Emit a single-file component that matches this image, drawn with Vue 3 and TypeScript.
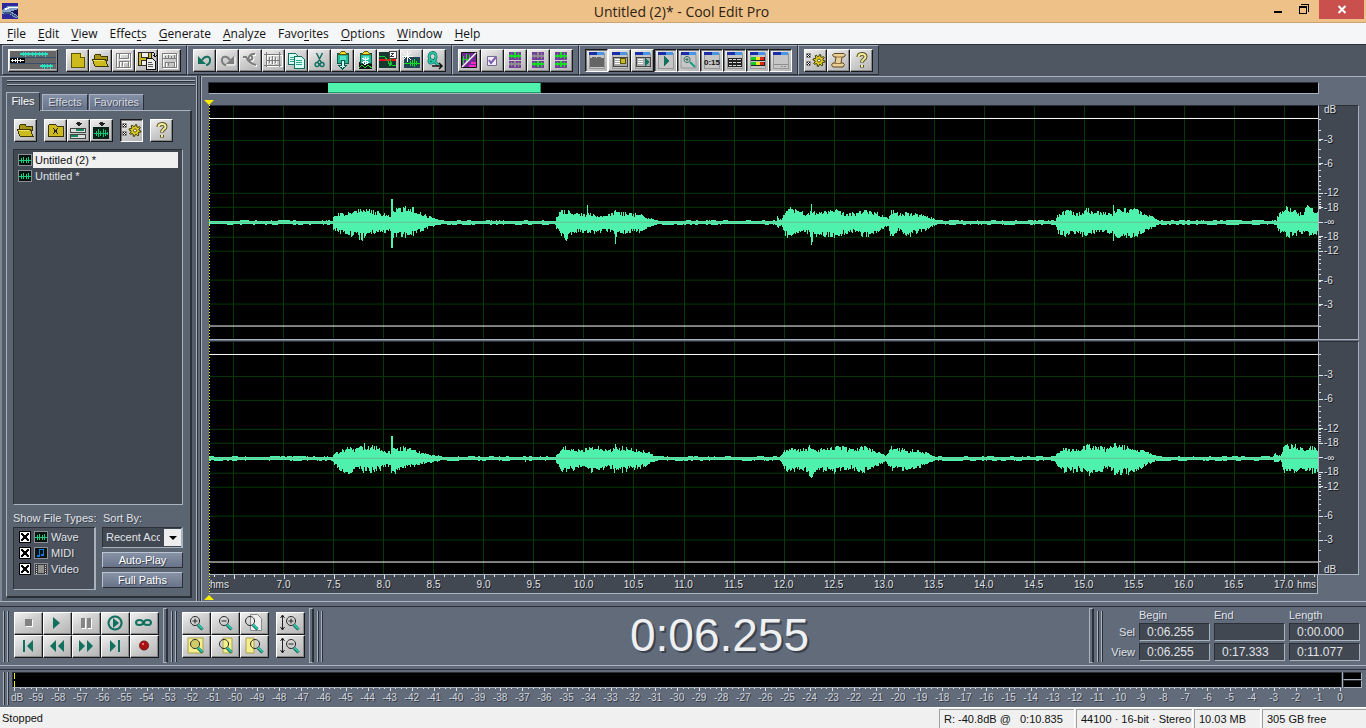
<script setup lang="ts">
import { ref } from 'vue'

type Shape = { d: string; f?: string; s?: string; w?: number }
type Tool = { id: string; label: string; down?: boolean; soft?: boolean; text?: string; shapes: Shape[] }

const OLIVE = '#3c3600'
const GOLD = '#cdbb1e'
const TEAL = '#12705f'
const AQUA = '#2ad0b0'
const GREY = '#7d7d7d'
const LIME = '#10e020'

function cog(cx: number, cy: number, outer: number, inner: number): string {
  const pts: string[] = []
  for (let i = 0; i < 32; i++) {
    const r = i % 4 < 2 ? outer : inner
    const a = ((i + 0.5) / 32) * Math.PI * 2
    pts.push(`${(cx + r * Math.cos(a)).toFixed(2)} ${(cy + r * Math.sin(a)).toFixed(2)}`)
  }
  return `M${pts.join('L')}z`
}

const folder: Shape[] = [
  { d: 'M5 7l2-2h4l1 2h6v4H5z', f: '#a89614', s: OLIVE },
  { d: 'M3 10h13l3 7H6z', f: GOLD, s: OLIVE },
  { d: 'M5 11h10', s: '#f0e468' },
]
const gear: Shape[] = [
  { d: 'M2.500 4.500h4v4h-4zM2.500 12.500h4v4h-4z', f: '#f4f4f4', s: '#888' },
  { d: 'M3 5l3 3M6 5l-3 3M3 13l3 3M6 13l-3 3', s: '#111' },
  { d: cog(15, 11.5, 6, 4), f: '#dccb22', s: '#3a3500' },
  { d: 'M15 10a1.500 1.500 0 1 0 .1 0z', f: '#fff', s: '#4a4400' },
]
const question: Shape[] = [
  { d: 'M8.500 8c0-4 7-4 7-.5 0 3-3.500 2.500-3.500 6M12 16v2.500', s: '#55501f', w: 4 },
  { d: 'M8.500 8c0-4 7-4 7-.5 0 3-3.500 2.500-3.500 5.500M12 16v2', s: '#f5eda0', w: 2 },
]
const win: Shape[] = [
  { d: 'M4 4h15v15H4z', f: '#c6c6c6', s: '#989898' },
  { d: 'M4 3h8v3H4z', f: '#1c2da8' },
  { d: 'M12 3h7v3h-7z', f: '#4a94e4' },
]
const wavePair = (top: string, low: string): Shape[] => [
  { d: 'M5 3h12v8H5zM5 12h12v7H5z', f: '#74409a' },
  { d: 'M5 6h12v2H5zM7 5h1v4H7zM10 3h2v6h-2zM14 4h1v6h-1z', f: top },
  { d: 'M5 14h12v2H5zM7 13h1v4H7zM10 12h2v6h-2zM14 13h1v5h-1z', f: low },
]
const clipboard: Shape[] = [
  { d: 'M6 4h11v10H6z', f: '#28b99b', s: '#0b5a4c' },
  { d: 'M8 5l3-3h2l3 3z', f: '#f0dc30', s: '#635800' },
  { d: 'M9 7h6v4H9z', f: '#4fe4c2' },
]

const fileTools: Tool[] = [
  { id: 'new', label: 'New', shapes: [{ d: 'M5 4h9l4 4v10H5z', f: GOLD, s: '#5e5400' }, { d: 'M14 4v4h4', f: '#f2e96c', s: '#5e5400' }] },
  { id: 'open', label: 'Open', shapes: folder },
  { id: 'save', label: 'Save', shapes: [{ d: 'M5 5h14v14H5zM8 5v5h9V5M8 19v-6h9v6M11 14v4', s: '#fff' }, { d: 'M4 4h14v14H4zM7 4v5h9V4M7 18v-6h9v6M10 13v4', s: GREY }] },
  { id: 'saveas', label: 'Save As', shapes: [{ d: 'M3 3h13v13H3z', f: GOLD, s: '#222' }, { d: 'M6 3h7v5H6zM6 11h5v5H6z', f: '#eee', s: '#333' }, { d: 'M11 9h6l3 3v8h-9z', f: '#eee', s: '#111' }, { d: 'M13 13h4M13 15h5M13 17h5', s: '#555' }, { d: 'M16 3c4 0 4 2 4 5M18 6l2 2 2-2', s: '#111' }] },
  { id: 'savesel', label: 'Save Selection', shapes: [{ d: 'M5 5h14v14H5zM8 19v-6h9v6', s: '#fff' }, { d: 'M4 4h14v14H4zM7 18v-5h9v5M10 14v3M4 9h14M7 7v3M10 6v4M13 7v3M16 6v4', s: GREY }] },
]
const editTools: Tool[] = [
  { id: 'undo', label: 'Undo', soft: true, shapes: [{ d: 'M9 11c3-5 9-4 8 1 0 2-2 4-4 4', s: TEAL, w: 2 }, { d: 'M5 7v8h8z', f: TEAL }] },
  { id: 'redo', label: 'Redo', soft: true, shapes: [{ d: 'M19 8v8h-8', s: '#fff' }, { d: 'M14 11c-3-5-9-4-8 1 0 2 2 4 4 4', s: GREY, w: 2 }, { d: 'M18 7v8h-8z', f: GREY }] },
  { id: 'repeat', label: 'Repeat Last Command', soft: true, shapes: [{ d: 'M17 6c-6-1-8 6-5 6 3 0 3-3 1-4M5 9h3c2 4 5 7 10 8', s: '#fff', w: 2 }, { d: 'M16 5c-6-1-8 6-5 6 3 0 3-3 1-4M4 8h3c2 4 5 7 10 8', s: GREY, w: 2 }] },
  { id: 'trim', label: 'Trim', shapes: [{ d: 'M5 6h15v11H5zM8 9v6M11 8v8M14 9v6', s: '#fff' }, { d: 'M2 5h17M2 16h17M4 3v15M17 3v15M4 11h13M7 8v6M10 7v8M13 8v6', s: GREY }] },
  { id: 'copy', label: 'Copy', shapes: [{ d: 'M3 4h7l3 3v8H3z', f: '#d9fff4', s: TEAL }, { d: 'M5 8h6M5 10h6M5 12h6', s: '#35a68e' }, { d: 'M9 7h7l3 3v9H9z', f: '#d9fff4', s: TEAL }, { d: 'M11 11h6M11 13h6M11 15h6', s: '#35a68e' }] },
  { id: 'cut', label: 'Cut', soft: true, shapes: [{ d: 'M8.500 4l5 10M14.500 4l-5 10M9 13.500a2 2 0 1 0 .1 0zM14 13.500a2 2 0 1 0 .1 0z', s: TEAL, w: 1.5 }] },
  { id: 'paste', label: 'Paste', shapes: [...clipboard, { d: 'M10 11h3v5h3l-4.500 4-4.500-4h3z', f: '#c9fff2', s: '#0b5a4c' }] },
  { id: 'mix', label: 'Mix Paste', shapes: [{ d: 'M5 13h13v7H5z', f: '#111' }, ...clipboard, { d: 'M11 8v8M8 13l3 3 4-3M8 9l7 5M15 9l-7 5', s: '#fff' }, { d: 'M5 19l3-3 3 3 3-3 4 3', s: LIME }] },
  { id: 'zero', label: 'Adjust Zero Crossings', shapes: [{ d: 'M2 3h17v16H2z', f: '#15392f' }, { d: 'M2 11h17', s: '#e61515', w: 2 }, { d: 'M2 7h5l4 5 2 5v-7l2 6h4', s: '#13c931' }, { d: 'M12 2h7v7h-7z', f: '#fff', s: '#444' }, { d: 'M14 4h3l-3 3h3', s: '#333' }] },
  { id: 'beat', label: 'Find Beats', shapes: [{ d: 'M4 8h16v11H4z', f: '#204656' }, { d: 'M7 2v11M2 7h11M3 3l8 8M11 3l-8 8', s: '#fff' }, { d: 'M4 14h16M10 12v5M12 11v6M14 10v8M16 12v4', s: LIME }] },
  { id: 'find', label: 'Scan Phrase', soft: true, shapes: [{ d: 'M7 10c-4-7 7-9 6-2-1 6-7 8-7 4 0-3 6 0 9 4', s: TEAL, w: 3 }, { d: 'M7 10c-4-7 7-9 6-2-1 6-7 8-7 4 0-3 6 0 9 4', s: AQUA, w: 1.5 }, { d: 'M9 17h9M16 14l3 3-3 3', s: '#111', w: 1.5 }] },
]
const viewTools: Tool[] = [
  { id: 'spectral', label: 'Spectral View', soft: true, shapes: [{ d: 'M3.500 3.500h15v15h-15z', f: '#702b91', s: '#111' }, { d: 'M4 10.500h6M5.500 7v8M8.500 5v9M11.500 6v5', s: LIME }, { d: 'M11 17h7M13 14h5', s: '#ff27ce', w: 2 }, { d: 'M4 18L18 4', s: '#fff', w: 1.5 }] },
  { id: 'select', label: 'Selection Check', soft: true, shapes: [{ d: 'M6.500 7.500h9v9h-9z', f: '#f3eefe', s: '#786b91' }, { d: 'M8 11l2 3 5-6', s: '#7d60b0', w: 2 }] },
  { id: 'left', label: 'Edit Left', shapes: wavePair(LIME, '#8d8d8d') },
  { id: 'right', label: 'Edit Right', shapes: wavePair('#8d8d8d', LIME) },
  { id: 'both', label: 'Edit Both', shapes: wavePair(LIME, LIME) },
]
const windowTools: Tool[] = [
  { id: 'organizer', label: 'Organizer', down: true, shapes: [...win, { d: 'M5 9h1l1-1h3l1 1 1-1h3l1 1h3v9H5z', f: '#656565' }] },
  { id: 'cues', label: 'Cue List', shapes: [...win, { d: 'M5 8h14v9H5z', f: '#aaa', s: '#444' }, { d: 'M7 10h5M7 12h5M7 14h5', s: '#fff' }, { d: 'M12 9h5v5h-5z', f: '#c9bb28', s: '#5b5300' }] },
  { id: 'plays', label: 'Play List', shapes: [...win, { d: 'M5 8h14v9H5z', f: '#aaa', s: '#444' }, { d: 'M7 10h5M7 12h5M7 14h5', s: '#fff' }, { d: 'M14 9l4 4-4 4z', f: TEAL }] },
  { id: 'transport', label: 'Transport Controls', down: true, shapes: [...win, { d: 'M10 7l5 5-5 5z', f: TEAL }] },
  { id: 'zoombar', label: 'Zoom Controls', down: true, soft: true, shapes: [...win, { d: 'M10 7.500a3 3 0 1 0 .1 0zM8.500 10.500h3M10 9v3', s: '#2a6a60' }, { d: 'M13 13l5 5', s: '#169b83', w: 2 }] },
  { id: 'time', label: 'Time Window', down: true, text: '0:15', shapes: win },
  { id: 'selview', label: 'Selection Window', down: true, shapes: [...win, { d: 'M5 9h14v9H5z', f: '#222' }, { d: 'M6 10h3v1H6zM10 10h3v1h-3zM14 10h4v1h-4zM6 13h3v1H6zM10 13h3v1h-3zM14 13h4v1h-4zM6 16h3v1H6zM10 16h3v1h-3zM14 16h4v1h-4z', f: '#d8d8d8' }] },
  { id: 'levels', label: 'Level Meters', down: true, shapes: [...win, { d: 'M5 8h14v4H5zM5 13h14v4H5z', f: '#222' }, { d: 'M5 8h5v3H5zM5 13h5v3H5z', f: '#14c82b' }, { d: 'M10 8h4v3h-4zM10 13h4v3h-4z', f: '#f1e920' }, { d: 'M14 8h4v3h-4zM14 13h4v3h-4z', f: '#e42318' }] },
  { id: 'status', label: 'Status Bar', down: true, shapes: [...win, { d: 'M5 15h14M12 17h2M15 17h2', s: '#8e8e8e' }] },
]
const helpTools: Tool[] = [
  { id: 'settings', label: 'Settings', soft: true, shapes: gear },
  { id: 'scripts', label: 'Scripts', soft: true, shapes: [{ d: 'M7 4.500h10l1.500 1.500-1.500 2h-2l-1 6h2l1.500 1.500-1.500 2.500H6l-1.500-2L6 14h2l1-6H7L5.500 6z', f: '#e9cf98', s: '#604923' }, { d: 'M8 8h7M8 14.500h6', s: '#96733a' }] },
  { id: 'help', label: 'Help', soft: true, shapes: question },
]
const toolGroups = [editTools, viewTools, windowTools, helpTools]

const insert = (wave: boolean): Shape[] => wave
  ? [{ d: 'M3 8h16v12H3z', f: '#072219' }, { d: 'M4 14h14M6 12v5M8 10v8M10 12v5M13 10v8M15 11v6M17 13v3', s: '#12c878' }, { d: 'M10 3h3v1h2l-3 3-4-3h2z', f: '#222' }]
  : [{ d: 'M3 9h15v4H3zM3 15h15v4H3z', f: '#ddd', s: '#444' }, { d: 'M9 11h8M4 17h7', s: '#11885e', w: 2 }, { d: 'M10 3h3v1h2l-3 3-4-3h2z', f: '#222' }]
const organizerGroups: Tool[][] = [
  [{ id: 'oopen', label: 'Open File', shapes: folder }],
  [
    { id: 'oclose', label: 'Close Files', shapes: [{ d: 'M4 7l2-2h5l2 2h6v10H4z', f: GOLD, s: OLIVE }, { d: 'M9 9l5 6M14 9l-5 6', s: '#222' }] },
    { id: 'oinsert', label: 'Insert Into Multitrack', shapes: insert(false) },
    { id: 'oedit', label: 'Edit File', shapes: insert(true) },
  ],
  [{ id: 'oadv', label: 'Advanced Options', down: true, soft: true, shapes: gear }],
  [{ id: 'ohelp', label: 'Organizer Help', soft: true, shapes: question }],
]

const transport: Tool[] = [
  { id: 'stop', label: 'Stop', shapes: [{ d: 'M12 8h7v7h-7z', f: '#fff' }, { d: 'M11 7h7v7h-7z', f: '#828282' }] },
  { id: 'play', label: 'Play', shapes: [{ d: 'M10 5v12l7-6z', f: TEAL }] },
  { id: 'pause', label: 'Pause', shapes: [{ d: 'M10 7h4v10h-4zM16 7h4v10h-4z', f: '#fff' }, { d: 'M9 6h4v10H9zM15 6h4v10h-4z', f: '#858585' }] },
  { id: 'playto', label: 'Play to End', shapes: [{ d: 'M14 4.500a6.500 6.500 0 1 0 .1 0z', s: TEAL, w: 2 }, { d: 'M12 6v10l6-5z', f: TEAL }] },
  { id: 'loop', label: 'Play Looped', shapes: [{ d: 'M6 10.500a3.500 2.500 0 1 0 7 0a3.500 2.500 0 1 0-7 0zM14 10.500a3.500 2.500 0 1 0 7 0a3.500 2.500 0 1 0-7 0z', s: TEAL, w: 2 }] },
  { id: 'begin', label: 'Go to Beginning', shapes: [{ d: 'M9 5h2v12H9zM19 5v12l-6-6z', f: TEAL }] },
  { id: 'rewind', label: 'Rewind', shapes: [{ d: 'M13 5v12l-6-6zM21 5v12l-6-6z', f: TEAL }] },
  { id: 'forward', label: 'Fast Forward', shapes: [{ d: 'M7 5v12l6-6zM15 5v12l6-6z', f: TEAL }] },
  { id: 'end', label: 'Go to End', shapes: [{ d: 'M9 5v12l6-6zM17 5h2v12h-2z', f: TEAL }] },
  { id: 'record', label: 'Record', shapes: [{ d: 'M14 6a4.500 4.500 0 1 0 .1 0z', f: '#ac1012', s: '#68191a' }, { d: 'M12 8h2v2h-2z', f: '#f07070' }] },
]
const lens = (mark = '', dx = 0): Shape[] => [
  { d: `M${13 + dx} 4.500a4.500 4.500 0 1 0 .1 0z${mark}`, s: '#252525' },
  { d: `M${16 + dx} 13l4.500 4.500`, s: '#0a5144', w: 3 },
  { d: `M${16 + dx} 12.500l4.500 4.500`, s: '#25c7aa', w: 2 },
]
const note = '#f4ef8c'
const zooms: Tool[] = [
  { id: 'zin', label: 'Zoom In', shapes: lens('M10.500 9h5M13 6.500v5') },
  { id: 'zout', label: 'Zoom Out', shapes: lens('M10.500 9h5') },
  { id: 'zfull', label: 'Zoom Full', shapes: [{ d: 'M10.500 2.500h7l4 4v12h-11z', f: '#eee', s: '#888' }, ...lens('', -3)] },
  { id: 'zsel', label: 'Zoom to Selection', shapes: [{ d: 'M6 3h15v15H6z', f: note, s: '#aaa24d' }, { d: 'M13 5a4 4 0 1 0 .1 0z', f: '#cfcb66' }, ...lens()] },
  { id: 'zleft', label: 'Zoom to Left of Selection', shapes: [{ d: 'M12 3h9v15h-9z', f: note, s: '#aaa24d' }, ...lens()] },
  { id: 'zright', label: 'Zoom to Right of Selection', shapes: [{ d: 'M6 3h8v15H6z', f: note, s: '#aaa24d' }, ...lens('', 2)] },
]
const upDown: Shape = { d: 'M6.500 3v15M4.500 6l2-3 2 3M4.500 15l2 3 2-3', s: '#222' }
const vzooms: Tool[] = [
  { id: 'vin', label: 'Zoom In Vertically', shapes: [upDown, ...lens('M12.500 9h5M15 6.500v5', 2)] },
  { id: 'vout', label: 'Zoom Out Vertically', shapes: [upDown, ...lens('M12.500 9h5', 2)] },
]

const menus = [['', 'F', 'ile'], ['', 'E', 'dit'], ['', 'V', 'iew'], ['Effec', 't', 's'], ['', 'G', 'enerate'], ['', 'A', 'nalyze'], ['Favo', 'r', 'ites'], ['', 'O', 'ptions'], ['', 'W', 'indow'], ['', 'H', 'elp']]

const files = ['Untitled (2) *', 'Untitled *']
const current = ref(0)
const types = ref([
  { name: 'Wave', on: true },
  { name: 'MIDI', on: true },
  { name: 'Video', on: true },
])

const viewStart = 6.255
const viewEnd = 17.333
const pct = (t: number) => ((t - viewStart) / (viewEnd - viewStart)) * 100
const halves = Array.from({ length: 22 }, (_, i) => 6.5 + i * 0.5)
const tenths = Array.from({ length: 111 }, (_, i) => Math.round((6.3 + i * 0.1) * 10) / 10)
const timeLabels = halves.filter((t) => t >= 7)

const dbAmp = (db: number) => Math.pow(10, -db / 20)
const levels = [3, 6, 12, 18]
const levelRows = [
  ...levels.map((db) => ({ text: `-${db}`, top: 50 - dbAmp(db) * 50 })),
  { text: '-∞', top: 50 },
  ...levels.map((db) => ({ text: `-${db}`, top: 50 + dbAmp(db) * 50 })),
]
const minorDb = Array.from({ length: 18 }, (_, i) => i + 1).flatMap((db) => [50 - dbAmp(db) * 50, 50 + dbAmp(db) * 50])

// Envelope points: time column, peak above centre, peak below centre.
type Point = [number, number, number]
const quiet = (x: number): Point => [x, 1, 1]
const channels: Point[][] = [
  [
    quiet(0), quiet(123), [124, 7, 8], [136, 10, 13], [146, 11, 14], [153, 15, 18], [157, 13, 14], [164, 12, 12], [176, 8, 10], [181, 8, 9], [182, 23, 25], [183, 23, 25], [184, 13, 16], [191, 14, 15], [197, 15, 15], [202, 16, 14], [211, 11, 10], [218, 6, 6], [226, 4, 3], [238, 1, 1],
    quiet(346), [347, 6, 6], [354, 14, 16], [357, 13, 18], [362, 11, 12], [371, 9, 10], [377, 8, 10], [378, 17, 12], [379, 9, 12], [396, 8, 9], [404, 9, 10], [406, 13, 21], [407, 11, 14], [416, 10, 12], [431, 8, 9], [441, 4, 4], [451, 1, 1],
    quiet(567), [568, 7, 6], [572, 1, 2], [576, 14, 13], [581, 14, 16], [588, 12, 12], [600, 9, 10], [602, 18, 22], [604, 11, 15], [616, 11, 14], [627, 14, 15], [636, 9, 11], [649, 11, 10], [654, 14, 17], [661, 13, 13], [671, 8, 8], [679, 4, 4], [682, 13, 17], [685, 11, 16], [689, 9, 9], [701, 10, 14], [711, 8, 10], [721, 5, 5], [730, 1, 1],
    quiet(846), [848, 8, 11], [856, 12, 14], [871, 10, 12], [876, 16, 16], [881, 11, 11], [896, 10, 11], [903, 9, 12], [904, 17, 18], [906, 14, 15], [919, 15, 17], [931, 12, 13], [941, 7, 7], [951, 1, 1],
    quiet(1067), [1068, 6, 8], [1074, 14, 14], [1078, 16, 15], [1083, 12, 14], [1094, 10, 11], [1098, 16, 14], [1103, 14, 14], [1109, 13, 15],
  ],
  [
    quiet(0), quiet(123), [124, 5, 5], [131, 8, 13], [137, 11, 16], [143, 10, 13], [149, 10, 12], [155, 14, 14], [166, 12, 13], [176, 8, 10], [181, 7, 8], [182, 22, 14], [183, 22, 14], [184, 11, 15], [196, 12, 11], [206, 8, 8], [216, 5, 5], [226, 3, 3], [238, 1, 1],
    quiet(315), [316, 3, 5], quiet(317), quiet(346), [347, 4, 5], [354, 12, 14], [366, 10, 11], [374, 9, 10], [382, 13, 14], [396, 11, 11], [403, 9, 10], [406, 13, 16], [416, 11, 13], [431, 9, 10], [441, 5, 5], [451, 1, 1],
    quiet(570), [575, 8, 11], [581, 12, 14], [593, 9, 11], [602, 13, 19], [606, 9, 13], [618, 10, 13], [628, 13, 15], [641, 9, 11], [655, 13, 15], [666, 8, 8], [676, 3, 3], [682, 12, 12], [696, 9, 12], [711, 8, 9], [726, 2, 2], [732, 1, 1],
    quiet(845), [848, 6, 9], [856, 11, 15], [871, 9, 12], [878, 14, 17], [886, 12, 15], [899, 10, 11], [904, 15, 15], [916, 13, 16], [926, 11, 13], [939, 6, 6], [949, 1, 1],
    quiet(1063), [1066, 5, 5], [1071, 2, 2], [1074, 11, 14], [1078, 15, 17], [1086, 13, 13], [1094, 9, 11], [1099, 13, 16], [1109, 11, 14],
  ],
]

function waveform(points: Point[], seed: number): string {
  const half = 116
  let out = ''
  let k = 0
  let state = seed
  const noise = () => {
    state = (Math.imul(state, 1664525) + 1013904223) >>> 0
    return state / 4294967296
  }
  let a = 1
  let b = 1
  for (let x = 0; x < 1109; x++) {
    while (k < points.length - 2 && points[k + 1][0] <= x) k++
    const [x0, u0, d0] = points[k]
    const [x1, u1, d1] = points[k + 1]
    const r = Math.min(1, Math.max(0, (x - x0) / (x1 - x0)))
    const up = u0 + (u1 - u0) * r
    const down = d0 + (d1 - d0) * r
    const calm = up < 2
    if (calm ? noise() > 0.6 : noise() > 0.15) {
      a = noise()
      b = noise()
    }
    const hi = calm ? (a > 0.7 ? 2 : 1) : Math.round(up * (up > 16 ? 1 : 0.6 + 0.45 * a))
    const lo = down < 2 ? (b > 0.7 ? 2 : 1) : Math.round(down * (down > 17 ? 1 : 0.56 + 0.48 * b))
    out += `M${x} ${half - hi}h1v${hi + lo + 1}h-1z`
  }
  return out
}
const waves = channels.map((c, i) => waveform(c, 17 + i * 40))

const meter = Array.from({ length: 61 }, (_, i) => ({ left: (i / 60) * 100, text: i === 0 ? 'dB' : i === 60 ? '0' : String(i - 60) }))
const meterTicks = Array.from({ length: 241 }, (_, i) => i / 2.4)
const times = [
  { name: 'Sel', values: ['0:06.255', '', '0:00.000'] },
  { name: 'View', values: ['0:06.255', '0:17.333', '0:11.077'] },
]
</script>

<template>
  <div class="app">
    <header class="title">
      <svg class="logo" viewBox="0 0 16 16" aria-hidden="true">
        <path d="M0 0h16v16H0z" fill="#2c2a9c" />
        <path d="M0 7L6 3h10v3l-6 2 6 4v3h-2l-7-4H0z" fill="#86a3cc" />
        <path d="M2 6l5-2h9v1H8L4 7z" fill="#fff" />
        <path d="M1 9h7l8 5v1L8 11H2z" fill="#40587c" />
        <path d="M9 8.500L16 6v7z" fill="#15165e" />
      </svg>
      <h1>Untitled (2)* - Cool Edit Pro</h1>
      <div class="winbtns">
        <button aria-label="Minimize"><svg viewBox="0 0 26 19"><path d="M9 11h8v2H9z" /></svg></button>
        <button aria-label="Restore"><svg viewBox="0 0 26 19"><path d="M8 6h8v8H8zM9 8v5h6V8zM10 4h8v8h-1V5h-7z" fill-rule="evenodd" /></svg></button>
        <button class="close" aria-label="Close"><svg viewBox="0 0 26 19"><path d="M9.500 6l7 7M16.500 6l-7 7" fill="none" stroke="#fff" stroke-width="2" /></svg></button>
      </div>
    </header>

    <nav class="menu">
      <a v-for="m in menus" :key="m.join('')" href="#">{{ m[0] }}<u>{{ m[1] }}</u>{{ m[2] }}</a>
    </nav>

    <div class="toolbars">
      <div class="group">
        <button class="tool multi" aria-label="Switch to Multitrack View">
          <svg viewBox="0 0 50 23">
            <path d="M2 2h46v18H2z" fill="#666" />
            <path d="M2 8.500h46M2 14.500h46" stroke="#35506e" />
            <path d="M2 9h15v5H2z" fill="#080808" />
            <path d="M12 5h28" stroke="#2be0c0" stroke-width="2" />
            <path d="M15.500 3v4M17.500 3v5M20.500 3v4M24.500 3v4M27.500 3v5M31.500 3v4M34.500 3v4M37.500 3v5" stroke="#2be0c0" />
            <path d="M3 11.500h13M4.500 10v3M7.500 10v3M9.500 9v5M12.500 10v3" stroke="#fff" />
            <path d="M32 17h13" stroke="#2be0c0" stroke-width="2" />
            <path d="M34.500 15v4M36.500 15v5M39.500 15v4M42.500 15v5" stroke="#2be0c0" />
          </svg>
        </button>
        <div class="run">
          <button v-for="t in fileTools" :key="t.id" class="tool" :aria-label="t.label">
            <svg viewBox="0 0 23 23"><path v-for="(p, i) in t.shapes" :key="i" :d="p.d" :fill="p.f ?? 'none'" :stroke="p.s ?? 'none'" :stroke-width="p.w ?? 1" /></svg>
          </button>
        </div>
      </div>
      <div v-for="(g, gi) in toolGroups" :key="gi" class="group">
        <button v-for="t in g" :key="t.id" class="tool" :class="{ down: t.down, soft: t.soft }" :aria-label="t.label">
          <svg viewBox="0 0 23 23">
            <path v-for="(p, i) in t.shapes" :key="i" :d="p.d" :fill="p.f ?? 'none'" :stroke="p.s ?? 'none'" :stroke-width="p.w ?? 1" />
            <text v-if="t.text" x="12" y="16" text-anchor="middle">{{ t.text }}</text>
          </svg>
        </button>
      </div>
    </div>

    <main class="work">
      <aside class="organizer">
        <div class="hgrip"></div>
        <div class="tabs" role="tablist">
          <button class="tab active" role="tab">Files</button>
          <button class="tab" role="tab">Effects</button>
          <button class="tab" role="tab">Favorites</button>
        </div>
        <section class="page">
          <div class="orgtools">
            <div v-for="(g, gi) in organizerGroups" :key="gi" class="run">
              <button v-for="t in g" :key="t.id" class="tool" :class="{ down: t.down, soft: t.soft }" :aria-label="t.label">
                <svg viewBox="0 0 23 23"><path v-for="(p, i) in t.shapes" :key="i" :d="p.d" :fill="p.f ?? 'none'" :stroke="p.s ?? 'none'" :stroke-width="p.w ?? 1" /></svg>
              </button>
            </div>
          </div>
          <ul class="files">
            <li v-for="(f, i) in files" :key="f" :class="{ on: i === current }" @click="current = i">
              <svg class="kind" viewBox="0 0 14 12"><path d="M.5.5h13v11H.5z" fill="#03140e" stroke="#8b8f96" /><path d="M1 6.500h12M3.500 4v5M5.500 3v6M8.500 4v5M10.500 3v6" stroke="#18d080" /></svg>
              <span>{{ f }}</span>
            </li>
          </ul>
          <div class="options">
            <div class="col types">
              <span class="cap">Show File Types:</span>
              <div class="typebox">
                <label v-for="(t, i) in types" :key="t.name">
                  <input v-model="t.on" type="checkbox" />
                  <svg class="kind" viewBox="0 0 14 12">
                    <path d="M.5.5h13v11H.5z" :fill="i === 2 ? '#3a3a3a' : '#03140e'" stroke="#8b8f96" />
                    <path v-if="i === 0" d="M1 6.500h12M3.500 4v5M5.500 3v6M8.500 4v5M10.500 3v6" stroke="#18d080" />
                    <path v-if="i === 1" d="M5.500 9V2.500h4V7" stroke="#1674e0" fill="none" />
                    <path v-if="i === 1" d="M3 8h3v2H3zM7 7h3v2H7z" fill="#1674e0" />
                    <path v-if="i === 2" d="M4 2h6v8H4z" fill="#909090" />
                    <path v-if="i === 2" d="M2.500 2v9M11.500 2v9" stroke="#ddd" stroke-dasharray="1 1" />
                  </svg>
                  <span>{{ t.name }}</span>
                </label>
              </div>
            </div>
            <div class="col sort">
              <label class="cap" for="sortby">Sort By:</label>
              <div class="selwrap">
                <select id="sortby"><option>Recent Access</option></select>
                <span class="arrow"></span>
              </div>
              <button class="flat">Auto-Play</button>
              <button class="flat">Full Paths</button>
            </div>
          </div>
        </section>
      </aside>
      <div class="split"></div>

      <section class="editor">
        <div class="overview"><div class="range"></div></div>
        <div class="display">
          <div class="cursor"></div>
          <template v-for="(w, c) in waves" :key="c">
            <div class="channel">
              <svg viewBox="0 0 1109 233" preserveAspectRatio="none">
                <path v-for="t in halves" :key="t" class="grid" :d="`M${Math.floor(pct(t) * 11.09) + 0.5} 0v233`" />
                <path v-for="(l, i) in levelRows" :key="i" class="grid" :d="`M0 ${Math.round(l.top * 2.33 - 0.5) + 0.5}h1109`" />
                <path :d="w" fill="#4ff2ac" />
                <path d="M0 116.500h1109" stroke="#68be92" />
                <path d="M0 12.500h1109M0 220.500h1109" stroke="#fff" />
              </svg>
            </div>
            <div class="scale">
              <i v-for="(m, i) in minorDb" :key="i" :style="{ top: m + '%' }"></i>
              <span v-for="(l, i) in levelRows" :key="'l' + i" :style="{ top: l.top + '%' }">{{ l.text }}</span>
              <b :class="c === 0 ? 'first' : 'last'">dB</b>
            </div>
          </template>
          <div class="ruler">
            <i v-for="t in tenths" :key="t" :class="{ major: (t * 10) % 5 === 0 }" :style="{ left: pct(t) + '%' }"></i>
            <span v-for="t in timeLabels" :key="'t' + t" :style="{ left: pct(t) + '%' }">{{ t.toFixed(1) }}</span>
            <b>hms</b><b>hms</b>
          </div>
        </div>
      </section>
    </main>

    <section class="controls">
      <div class="vgrip"></div>
      <div class="pad five">
        <button v-for="t in transport" :key="t.id" class="tool wide" :aria-label="t.label">
          <svg viewBox="0 0 28 22"><path v-for="(p, i) in t.shapes" :key="i" :d="p.d" :fill="p.f ?? 'none'" :stroke="p.s ?? 'none'" :stroke-width="p.w ?? 1" /></svg>
        </button>
      </div>
      <div class="bar"></div>
      <div class="vgrip"></div>
      <div class="pad three">
        <button v-for="t in zooms" :key="t.id" class="tool wide" :aria-label="t.label">
          <svg viewBox="0 0 28 22"><path v-for="(p, i) in t.shapes" :key="i" :d="p.d" :fill="p.f ?? 'none'" :stroke="p.s ?? 'none'" :stroke-width="p.w ?? 1" /></svg>
        </button>
      </div>
      <div class="pad one">
        <button v-for="t in vzooms" :key="t.id" class="tool wide" :aria-label="t.label">
          <svg viewBox="0 0 28 22"><path v-for="(p, i) in t.shapes" :key="i" :d="p.d" :fill="p.f ?? 'none'" :stroke="p.s ?? 'none'" :stroke-width="p.w ?? 1" /></svg>
        </button>
      </div>
      <div class="bar"></div>
      <div class="vgrip"></div>
      <output class="clock">0:06.255</output>
      <div class="bar"></div>
      <div class="vgrip"></div>
      <table class="times">
        <thead><tr><td></td><th>Begin</th><th>End</th><th>Length</th></tr></thead>
        <tbody>
          <tr v-for="r in times" :key="r.name">
            <th scope="row">{{ r.name }}</th>
            <td v-for="(v, i) in r.values" :key="i"><input :value="v" :aria-label="`${r.name} ${['begin', 'end', 'length'][i]}`" /></td>
          </tr>
        </tbody>
      </table>
    </section>

    <section class="meters">
      <div class="vgrip"></div>
      <div class="meter">
        <div class="leds"><i></i></div>
        <div class="mticks"><i v-for="(t, i) in meterTicks" :key="i" :class="{ major: i % 4 === 0 }" :style="{ left: t + '%' }"></i></div>
        <div class="mlabels"><span v-for="m in meter" :key="m.text" :style="{ left: m.left + '%' }">{{ m.text }}</span></div>
      </div>
      <div class="clip"><i></i><i></i></div>
    </section>

    <footer class="status">
      <span class="state">Stopped</span>
      <span class="cell c1">R: -40.8dB @ &nbsp; 0:10.835</span>
      <span class="cell c2">44100 · 16-bit · Stereo</span>
      <span class="cell c3">10.03 MB</span>
      <span class="cell c4">305 GB free</span>
    </footer>
  </div>
</template>

<style>
body { margin: 0; overflow: hidden; }
</style>

<style scoped>
* { box-sizing: border-box; }
.app {
  --mid: #626b7a; --dark: #424852; --lo: #2b3038; --hi: #a9b3c0; --txt: #e0e3e8;
  display: flex; flex-direction: column; min-height: 100vh;
  background: var(--mid); color: var(--txt);
  font: 11px/13px "Liberation Sans", Arial, sans-serif;
}
button, select, input { font: inherit; color: inherit; padding: 0; margin: 0; border-radius: 0; }
svg { display: block; }

.title { display: flex; align-items: center; height: 23px; background: #eec188; border-bottom: 1px solid #c9a472; color: #2c2114; }
.logo { width: 16px; height: 16px; margin-left: 2px; shape-rendering: crispEdges; }
.title h1 { flex: 1; margin: 0; text-align: center; font: 14px/20px "Open Sans", "Noto Sans", sans-serif; padding: 2px 0 0 80px; }
.winbtns { display: flex; align-self: flex-start; padding-right: 2px; }
.winbtns button { width: 26px; height: 19px; border: 0; background: none; display: flex; justify-content: center; }
.winbtns svg { width: 26px; height: 19px; }
.winbtns .close { width: 45px; background: #c9504d; margin-left: 2px; }

.menu { display: flex; gap: 12px; height: 21px; padding-left: 7px; align-items: center; background: #f5f6f7; font: 12px/18px "Open Sans", "Noto Sans", sans-serif; }
.menu a { color: #111; text-decoration: none; }
.menu u { text-underline-offset: 2px; }

.toolbars { display: flex; height: 32px; padding: 0 0 1px 2px; background: #4f5762; border-top: 1px solid var(--lo); }
.group { display: flex; align-items: center; padding: 0 5px; background: var(--mid); border: 1px solid var(--hi); border-right-color: var(--lo); border-bottom-color: var(--lo); }
.run { display: flex; }
.multi + .run { margin-left: 8px; }
.tool { width: 23px; height: 23px; border: 1px solid; border-color: #fff #15181c #15181c #fff; background: linear-gradient(150deg, #f0f0f0, #cfcfcf 45%, #b4b4b4); box-shadow: inset -1px -1px #8a8a8a; flex: none; display: flex; overflow: hidden; }
.tool svg { width: 23px; height: 23px; margin: -1px; flex: none; shape-rendering: crispEdges; }
.tool.soft svg { shape-rendering: auto; }
.tool text { font: bold 8px "Liberation Sans", Arial, sans-serif; fill: #111; }
.tool.multi { width: 50px; }
.tool.multi svg { width: 50px; }
.tool.down { border-color: #15181c #fff #fff #15181c; box-shadow: inset 1px 1px #777; }

.work { flex: 1; display: flex; min-height: 400px; }
.organizer { width: 196px; flex: none; display: flex; flex-direction: column; padding: 3px 4px 3px 5px; background: #535c69; border-left: 2px solid #7c8694; border-top: 1px solid var(--hi); }
.hgrip { height: 5px; margin-right: -3px; border-top: 1px solid var(--hi); border-bottom: 1px solid var(--hi); box-shadow: 0 1px var(--lo), inset 0 1px var(--lo); flex: none; }
.tabs { display: flex; align-items: flex-end; gap: 1px; margin-top: 7px; flex: none; }
.tab { height: 16px; width: 46px; border: 1px solid var(--hi); border-right-color: var(--lo); border-bottom: 0; background: linear-gradient(#8490a6, #66728a); color: #d3d7df; text-shadow: 1px 1px #444b57; }
.tab:last-child { width: 55px; }
.tab.active { width: 34px; height: 19px; background: #5b6471; margin: 0 1px -1px -1px; z-index: 1; padding-bottom: 1px; color: #fff; }
.page { flex: 1; display: flex; flex-direction: column; padding: 8px 7px 6px 6px; margin-left: -1px; background: #5b6471; border: 1px solid var(--hi); border-right: 2px solid var(--lo); border-bottom: 2px solid var(--lo); }
.orgtools { display: flex; gap: 7px; margin-bottom: 7px; padding-left: 1px; }
.files { flex: 1; list-style: none; margin: 0; padding: 2px 4px; background: var(--dark); border: 1px solid var(--lo); border-right-color: var(--hi); border-bottom-color: var(--hi); }
.files li { display: flex; align-items: center; height: 16px; }
.files span { flex: 1; line-height: 16px; padding-left: 2px; margin-left: 1px; }
.files .on span { background: #f0f0f0; color: #111; }
.kind { width: 14px; height: 12px; flex: none; shape-rendering: crispEdges; }
.options { display: flex; gap: 6px; margin-top: 7px; flex: none; }
.col { display: flex; flex-direction: column; }
.types { width: 83px; }
.sort { flex: 1; gap: 4px; }
.cap { height: 15px; white-space: nowrap; text-shadow: 1px 1px #3c424d; }
.sort .cap { height: 11px; padding-left: 1px; }
.typebox { height: 63px; padding: 1px 5px; border: 1px solid var(--lo); border-right: 2px solid var(--hi); border-bottom: 1px solid var(--hi); background: #4a515c; }
.typebox label { display: flex; align-items: center; height: 16px; gap: 3px; text-shadow: 1px 1px #2c313a; }
.typebox input { appearance: none; width: 12px; height: 12px; background: #fff; border: 1px solid #000; flex: none; }
.typebox input:checked { background: linear-gradient(45deg, transparent 40%, #000 40%, #000 60%, transparent 60%), linear-gradient(-45deg, #fff 40%, #000 40%, #000 60%, #fff 60%); background-clip: content-box; background-origin: content-box; padding: 1px; box-shadow: inset 0 0 0 1px #fff; }
.selwrap { position: relative; height: 21px; }
select { appearance: none; width: 100%; height: 21px; padding: 0 21px 0 3px; background: var(--dark); border: 1px solid var(--lo); border-right: 2px solid var(--hi); border-bottom-color: var(--hi); text-overflow: clip; }
.arrow { position: absolute; right: 2px; top: 2px; width: 17px; height: 17px; background: #eee; pointer-events: none; display: flex; align-items: center; justify-content: center; }
.arrow::after { content: ""; border: 4px solid transparent; border-top-color: #000; border-bottom: 0; }
.flat { height: 16px; border: 1px solid; border-color: #b9c4d3 var(--lo) var(--lo) #b9c4d3; background: linear-gradient(#8792a6, #69748a); line-height: 13px; text-shadow: 1px 1px #3c424d; color: #fff; }

.split { width: 6px; flex: none; background: var(--mid); border: 1px solid var(--hi); border-width: 0 1px; box-shadow: inset 1px 0 var(--lo), inset -1px 0 var(--lo); }
.editor { flex: 1; min-width: 0; display: flex; flex-direction: column; padding: 5px 7px 7px 6px; border-top: 1px solid var(--hi); }
.overview { height: 12px; margin-right: 40px; background: #000; border: 1px solid var(--lo); border-right-color: var(--hi); border-bottom-color: var(--hi); flex: none; }
.range { width: 19.2%; height: 100%; margin-left: 10.7%; background: #4ff2ac; border-right: 1px solid #1f9a68; border-bottom: 1px solid #1f9a68; }
.display { flex: 1; position: relative; display: grid; grid-template-columns: 1fr 41px; grid-template-rows: 1fr 1fr 18px; row-gap: 1px; margin-top: 11px; padding-left: 1px; }
.channel { position: relative; min-height: 0; background: #000; border-top: 1px solid var(--lo); border-bottom: 1px solid var(--hi); }
.channel svg { position: absolute; width: 100%; height: 100%; shape-rendering: crispEdges; }
.grid { stroke: #063a06; }
.scale { position: relative; background: var(--dark); border: 1px solid var(--hi); border-top-color: var(--lo); font-size: 10px; line-height: 12px; text-shadow: 1px 1px #15181c; }
.scale i { position: absolute; left: 0; width: 2px; height: 1px; background: var(--txt); }
.scale span { position: absolute; left: 0; display: flex; align-items: center; margin-top: -6px; }
.scale span::before { content: ""; width: 4px; height: 1px; background: var(--txt); margin-right: 1px; }
.scale b { position: absolute; left: 5px; font-weight: normal; }
.scale .first { top: -2px; }
.scale .last { bottom: -2px; }
.ruler { position: relative; margin-top: -1px; background: var(--dark); border-right: 1px solid var(--hi); border-bottom: 1px solid var(--hi); font-size: 10px; line-height: 12px; text-shadow: 1px 1px #15181c; display: flex; justify-content: space-between; padding: 4px 1px 0; }
.ruler i { position: absolute; top: 0; width: 1px; height: 2px; background: var(--txt); }
.ruler i.major { height: 4px; }
.ruler span { position: absolute; top: 4px; transform: translateX(-50%); }
.ruler b { font-weight: normal; }
.cursor { position: absolute; left: 1px; top: 0; bottom: 0; width: 1px; background: repeating-linear-gradient(#f4f400 0 1px, transparent 1px 3px); z-index: 2; }
.cursor::before, .cursor::after { content: ""; position: absolute; left: -5px; border: 5px solid transparent; }
.cursor::before { top: -5px; border-top-color: #ffee00; border-bottom: 0; }
.cursor::after { bottom: -6px; border-bottom-color: #ffee00; border-top: 0; }

.controls { display: flex; height: 64px; padding: 0 6px 0 2px; border-top: 1px solid var(--hi); background: linear-gradient(#626b7a 4px, #2b3038 4px, #2b3038 5px, #626b7a 5px); }
.vgrip { width: 5px; margin: 9px 0 3px 1px; border: 1px solid var(--hi); border-width: 0 1px; box-shadow: 1px 0 var(--lo), inset 1px 0 var(--lo); flex: none; }
.bar { width: 5px; margin: 6px 2px 2px 4px; border: 1px solid var(--hi); border-right: 2px solid var(--lo); flex: none; }
.pad { display: grid; grid-auto-rows: 23px; margin: 10px 0 0 6px; align-content: start; flex: none; }
.five { grid-template-columns: repeat(5, 29px); }
.three { grid-template-columns: repeat(3, 29px); }
.one { grid-template-columns: 29px; margin-left: 7px; }
.tool.wide { width: 29px; height: 23px; }
.tool.wide svg { width: 28px; height: 22px; shape-rendering: auto; }
.clock { flex: 1; align-self: center; text-align: center; font-size: 46px; line-height: 50px; color: #eef0f2; text-shadow: 2px 2px #3b424e; padding: 3px 0 0 32px; }
.times { border-spacing: 0; margin: 6px 0 0 3px; table-layout: fixed; width: 255px; flex: none; height: 54px; text-shadow: 1px 1px #3b424e; }
.times td, .times th { padding: 0; font-weight: normal; text-align: left; }
.times thead td { width: 30px; }
.times thead th { height: 14px; padding-left: 4px; }
.times tbody th { text-align: right; }
.times tbody td { padding-left: 4px; height: 20px; }
.times input { display: block; width: 100%; height: 18px; padding-left: 7px; font-size: 12px; background: var(--dark); border: 1px solid var(--lo); border-right-color: var(--hi); border-bottom-color: var(--hi); }

.meters { display: flex; height: 42px; padding: 0 4px 0 2px; border-top: 1px solid var(--hi); background: linear-gradient(#626b7a 3px, #2b3038 3px, #2b3038 4px, #626b7a 4px); }
.meters .vgrip { margin: 6px 4px 2px 1px; }
.meter { flex: 1; padding-top: 6px; }
.leds { height: 16px; background: #000; border: 1px solid var(--lo); border-bottom-color: var(--hi); }
.leds i { display: block; width: 1px; height: 14px; margin-left: 1px; background: linear-gradient(#f4f400 6px, transparent 6px, transparent 8px, #f4f400 8px); }
.mticks, .mlabels { position: relative; margin: 0 2px; height: 4px; }
.mticks i { position: absolute; width: 1px; height: 1px; background: var(--txt); }
.mticks i.major { height: 3px; }
.mlabels { font-size: 10px; line-height: 12px; color: #d0d5db; text-shadow: 1px 1px #343a45; }
.mlabels span { position: absolute; top: 0; transform: translateX(-50%); }
.mlabels span:first-child { margin-left: 3px; }
.clip { width: 20px; margin-top: 6px; height: 16px; display: grid; grid-template-rows: 1fr 1fr; border-left: 1px solid var(--hi); }
.clip i { background: #000; border: 1px solid var(--lo); border-right-color: var(--hi); border-bottom-color: var(--hi); }

.status { display: flex; height: 21px; background: #f0f0f0; border-top: 1px solid #fff; color: #111; line-height: 20px; }
.state { flex: 1; padding-left: 2px; }
.cell { border-left: 1px solid #a0a0a0; border-top: 1px solid #a0a0a0; padding-left: 4px; margin-top: 1px; margin-left: 2px; white-space: nowrap; line-height: 18px; box-shadow: 1px 0 #fff; }
.c1 { width: 135px; }
.c2 { width: 116px; }
.c3 { width: 66px; }
.c4 { width: 104px; }
</style>
